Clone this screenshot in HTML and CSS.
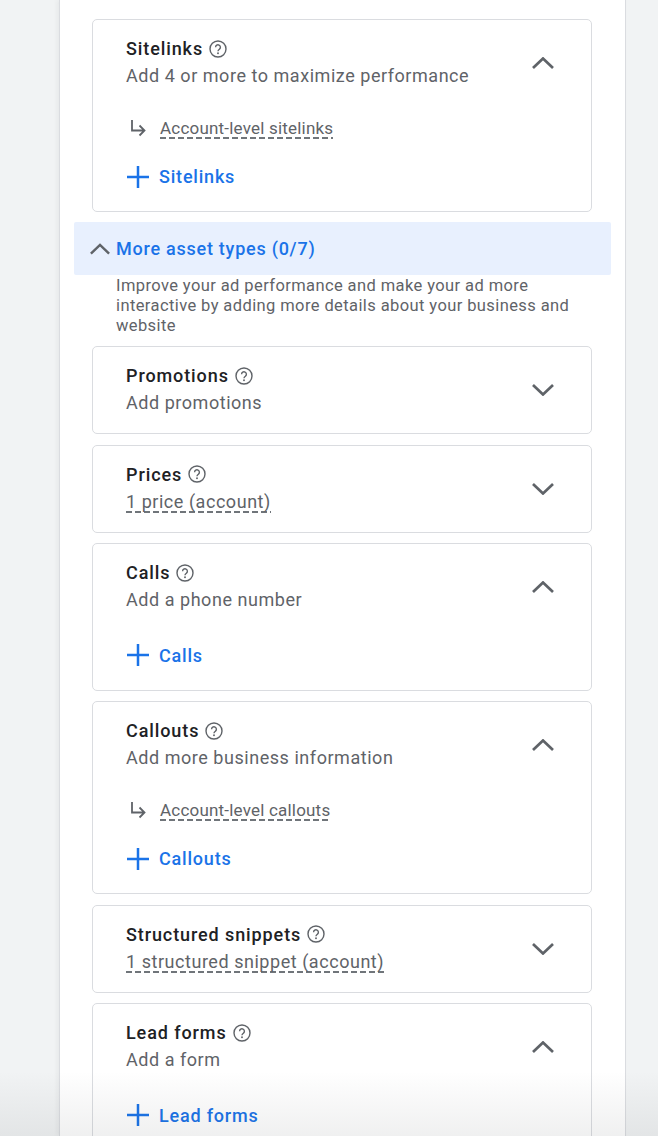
FILE: index.html
```html
<!DOCTYPE html>
<html lang="en">
<head>
<meta charset="utf-8">
<title>Assets</title>
<link rel="stylesheet" href="styles.css">
</head>
<body>
<svg class="defs" width="0" height="0" aria-hidden="true">
  <symbol id="help" viewBox="0 0 18 18">
    <circle cx="9" cy="9" r="8" fill="none" stroke="currentColor" stroke-width="1.4"/>
    <path d="M6.6 7.2a2.4 2.4 0 1 1 3.9 1.9c-.9.7-1.500 1.100-1.500 2.200" fill="none" stroke="currentColor" stroke-width="1.4"/>
    <circle cx="9" cy="13.3" r=".95" fill="currentColor"/>
  </symbol>
  <symbol id="up" viewBox="0 0 22 12"><path d="M1 11 11 1.500 21 11" fill="none" stroke="currentColor" stroke-width="2.7"/></symbol>
  <symbol id="down" viewBox="0 0 22 12"><path d="M1 1 11 10.500 21 1" fill="none" stroke="currentColor" stroke-width="2.7"/></symbol>
  <symbol id="plus" viewBox="0 0 22 22"><path d="M0 11h22M11 0v22" fill="none" stroke="currentColor" stroke-width="2.5"/></symbol>
  <symbol id="sub" viewBox="0 0 16 18"><path d="M2 1v10.500h12M9.500 6.500l5 5-5 5" fill="none" stroke="currentColor" stroke-width="1.8"/></symbol>
</svg>
<main class="panel">
  <section class="card">
    <div class="head">
      <div class="text">
        <div class="title">Sitelinks <svg class="help"><use href="#help"/></svg></div>
        <div class="sub">Add 4 or more to maximize performance</div>
      </div>
      <svg class="chev"><use href="#up"/></svg>
    </div>
    <div class="account"><svg class="arrow"><use href="#sub"/></svg><span class="dash small">Account-level sitelinks</span></div>
    <div class="action after"><svg class="plus"><use href="#plus"/></svg>Sitelinks</div>
  </section>

  <div class="band"><svg class="band-chev"><use href="#up"/></svg>More asset types (0/7)</div>
  <p class="desc">Improve your ad performance and make your ad more interactive by adding more details about your business and website</p>

  <section class="card first">
    <div class="head">
      <div class="text">
        <div class="title">Promotions <svg class="help"><use href="#help"/></svg></div>
        <div class="sub">Add promotions</div>
      </div>
      <svg class="chev"><use href="#down"/></svg>
    </div>
  </section>
  <section class="card">
    <div class="head">
      <div class="text">
        <div class="title">Prices <svg class="help"><use href="#help"/></svg></div>
        <div class="sub"><span class="dash">1 price (account)</span></div>
      </div>
      <svg class="chev"><use href="#down"/></svg>
    </div>
  </section>
  <section class="card">
    <div class="head">
      <div class="text">
        <div class="title">Calls <svg class="help"><use href="#help"/></svg></div>
        <div class="sub">Add a phone number</div>
      </div>
      <svg class="chev"><use href="#up"/></svg>
    </div>
    <div class="action"><svg class="plus"><use href="#plus"/></svg>Calls</div>
  </section>
  <section class="card">
    <div class="head">
      <div class="text">
        <div class="title">Callouts <svg class="help"><use href="#help"/></svg></div>
        <div class="sub">Add more business information</div>
      </div>
      <svg class="chev"><use href="#up"/></svg>
    </div>
    <div class="account"><svg class="arrow"><use href="#sub"/></svg><span class="dash small">Account-level callouts</span></div>
    <div class="action after"><svg class="plus"><use href="#plus"/></svg>Callouts</div>
  </section>
  <section class="card">
    <div class="head">
      <div class="text">
        <div class="title">Structured snippets <svg class="help"><use href="#help"/></svg></div>
        <div class="sub"><span class="dash">1 structured snippet (account)</span></div>
      </div>
      <svg class="chev"><use href="#down"/></svg>
    </div>
  </section>
  <section class="card">
    <div class="head">
      <div class="text">
        <div class="title">Lead forms <svg class="help"><use href="#help"/></svg></div>
        <div class="sub">Add a form</div>
      </div>
      <svg class="chev"><use href="#up"/></svg>
    </div>
    <div class="action"><svg class="plus"><use href="#plus"/></svg>Lead forms</div>
  </section>
</main>
<div class="fade"></div>
</body>
</html>
```
FILE: styles.css
```css
* { box-sizing: border-box; }
html, body { margin: 0; height: 1136px; overflow: hidden; }
body {
  background: #f1f3f4;
  font-family: Roboto, "Noto Sans", sans-serif;
  color: #5f6368;
}
.defs { position: absolute; }
.panel {
  width: 567px;
  height: 1136px;
  margin-left: 59px;
  padding: 19px 14px 0;
  background: #fff;
  border-inline: 1px solid #dadce0;
  box-shadow: -2px 0 4px rgba(60, 64, 67, .06);
  overflow: hidden;
}
.card {
  width: 500px;
  margin: 0 19px 10.5px 18px;
  padding: 0 33px 22.2px;
  border: 1px solid #dadce0;
  border-radius: 5px;
  background: #fff;
}
.card:not(:has(.action)) { padding-bottom: 0; }
.card.first { margin-top: 9.6px; }
.head {
  display: flex;
  justify-content: space-between;
  align-items: center;
  height: 86px;
}
.text {
  align-self: flex-start;
  padding-top: 15px;
}
.title {
  display: flex;
  align-items: center;
  gap: 6px;
  height: 27px;
  font-size: 18px;
  font-weight: 500;
  letter-spacing: .9px;
  color: #202124;
}
.sub {
  height: 27px;
  line-height: 27px;
  font-size: 18px;
  letter-spacing: .54px;
  white-space: nowrap;
}
.help { width: 18px; height: 18px; color: #5f6368; flex: none; }
.chev { width: 22px; height: 12px; margin-right: 4px; color: #5f6368; flex: none; }
.dash {
  padding-bottom: 1px;
  background: repeating-linear-gradient(90deg, #70757a 0 6px, transparent 6px 9px) left bottom / 100% 2px no-repeat;
}
.small { margin-left: 14px; font-size: 17px; letter-spacing: .2px; }
.account {
  display: flex;
  align-items: center;
  height: 24px;
  margin-top: 10px;
}
.arrow { width: 16px; height: 18px; margin-left: 4px; color: #5f6368; flex: none; }
.action {
  display: flex;
  align-items: center;
  gap: 10px;
  height: 24px;
  margin: 13px 0 .3px 1px;
  font-size: 18px;
  font-weight: 500;
  letter-spacing: .8px;
  color: #1a73e8;
}
.action.after { margin-top: 24.5px; }
.plus { width: 22px; height: 22px; flex: none; }
.band {
  display: flex;
  align-items: center;
  gap: 6px;
  width: 537px;
  height: 53px;
  margin-top: 10px;
  padding-left: 16px;
  background: #e8f0fe;
  border-radius: 2px;
  font-size: 18px;
  font-weight: 500;
  letter-spacing: .75px;
  color: #1a73e8;
}
.band-chev { width: 20px; height: 12px; color: #5f6368; flex: none; }
.desc {
  width: 537px;
  margin: 0;
  padding: 1px 38px 0 42px;
  font-size: 16.5px;
  line-height: 20px;
  letter-spacing: .4px;
}
.fade {
  position: absolute;
  left: 0;
  right: 0;
  bottom: 0;
  height: 65px;
  background: linear-gradient(rgba(60, 64, 67, 0), rgba(60, 64, 67, .08));
  pointer-events: none;
}
```
